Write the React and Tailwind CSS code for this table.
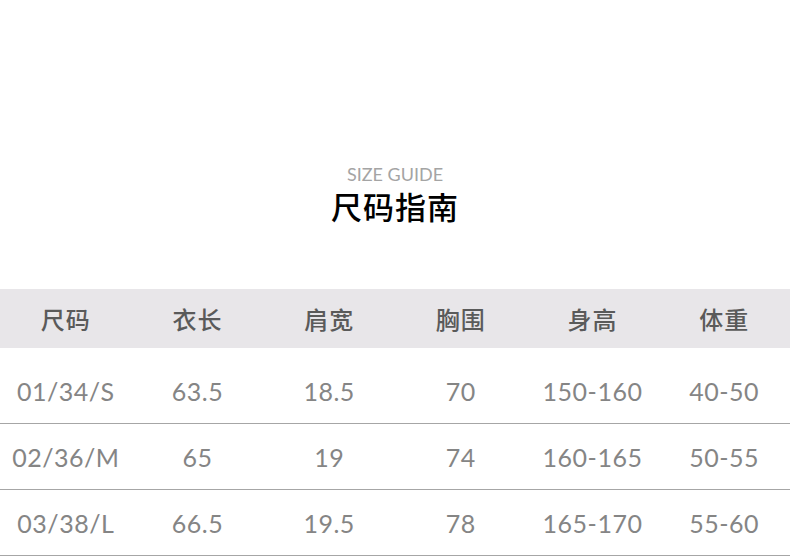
import React from 'react';

const HEAD = ['尺码', '衣长', '肩宽', '胸围', '身高', '体重'];
const ROWS = [
  ['01/34/S', '63.5', '18.5', '70', '150-160', '40-50'],
  ['02/36/M', '65', '19', '74', '160-165', '50-55'],
  ['03/38/L', '66.5', '19.5', '78', '165-170', '55-60'],
];

export default function App() {
  return (
    <div className="w-[790px] h-[557px] bg-white overflow-hidden font-['Lato','Noto_Sans_CJK_SC',sans-serif]">
      {/* Title */}
      <div className="pt-[163px] flex flex-col items-center">
        <div className="text-[18px] leading-[22px] text-[#a4a4a4] font-normal tracking-[0px]">SIZE GUIDE</div>
        <h1 className="mt-[2px] text-[31px] leading-[38px] text-black font-medium font-['Noto_Sans_CJK_SC',sans-serif] tracking-[1px]">尺码指南</h1>
      </div>

      {/* Table */}
      <div className="mt-[64px]">
        <div className="grid grid-cols-6 h-[59px] bg-[#e8e6e9] items-center">
          {HEAD.map((h) => (
            <div key={h} className="text-center text-[24px] text-[#5a5a5a] font-medium font-['Noto_Sans_CJK_SC',sans-serif] tracking-[1px]">
              {h}
            </div>
          ))}
        </div>
        <div className="pt-[10px]">
          {ROWS.map((r) => (
            <div key={r[0]} className="grid grid-cols-6 h-[66px] items-center border-b border-[#a6a6a6]">
              {r.map((c, i) => (
                <div key={i} className="text-center text-[25px] text-[#858585] tracking-[0.5px] pt-[2px]">
                  {c}
                </div>
              ))}
            </div>
          ))}
        </div>
      </div>
    </div>
  );
}
